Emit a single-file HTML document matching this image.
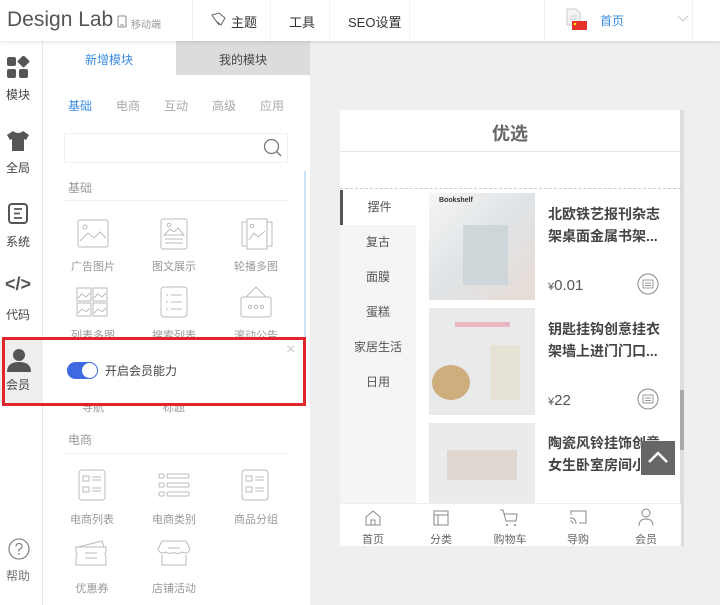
<!DOCTYPE html>
<html><head><meta charset="utf-8"><style>
*{margin:0;padding:0;box-sizing:border-box}
body{width:720px;height:605px;overflow:hidden;background:#efefef;font-family:"Liberation Sans","Noto Sans CJK SC",sans-serif;position:relative;color:#555}
.a{position:absolute}
.t{position:absolute;white-space:nowrap}
.hdr{left:0;top:0;width:720px;height:41px;background:#fff;box-shadow:0 1px 4px rgba(0,0,0,.12);z-index:5}
.sep{position:absolute;top:0;width:1px;height:41px;background:#f0f0f0}
.side{left:0;top:41px;width:43px;height:564px;background:#fff;border-right:1px solid #e8e8e8}
.sl{font-size:12px;color:#444;width:36px;text-align:center;left:0}
.panel{left:43px;top:41px;width:267px;height:564px;background:#fff}
.lbl{font-size:11px;color:#999;width:70px;text-align:center}
.cat{left:340px;width:76px;height:35px;font-size:12px;color:#555;text-align:center;line-height:35px}
.pt{font-size:14px;font-weight:bold;color:#444;line-height:22px;left:548px}
.pr{font-size:15px;color:#555;left:548px}
.tab{font-size:11px;color:#666;width:68px;text-align:center}
</style></head><body>
<div class="a hdr">
 <div class="t" style="left:7px;top:8px;font-size:21px;color:#555">Design Lab</div>
 <svg class="a" style="left:117px;top:15px" width="10" height="13"><rect x="1" y="1" width="8" height="11" rx="1" fill="none" stroke="#888"/><line x1="3" y1="10" x2="7" y2="10" stroke="#888"/></svg>
 <div class="t" style="left:131px;top:16px;font-size:10px;color:#999">移动端</div>
 <div class="sep" style="left:192px"></div>
 <svg class="a" style="left:210px;top:12px" width="17" height="15"><path d="M2 3 L9 1 L15 6 L11 13 L6 9 Z M6 9 L9 13" fill="none" stroke="#666"/></svg>
 <div class="t" style="left:231px;top:12px;font-size:13px;color:#333">主题</div>
 <div class="sep" style="left:270px"></div>
 <div class="t" style="left:289px;top:12px;font-size:13px;color:#333">工具</div>
 <div class="sep" style="left:329px"></div>
 <div class="t" style="left:348px;top:12px;font-size:13px;color:#333">SEO设置</div>
 <div class="sep" style="left:409px"></div>
 <div class="sep" style="left:544px"></div>
 <svg class="a" style="left:565px;top:8px" width="24" height="24"><path d="M2 1 H11 L15 5 V17 H2 Z" fill="#f4f4f4" stroke="#ccc"/><line x1="5" y1="8" x2="12" y2="8" stroke="#ccc"/><line x1="5" y1="11" x2="12" y2="11" stroke="#ccc"/><rect x="7" y="13" width="15" height="9" fill="#e5322b"/><circle cx="10" cy="16" r="1.3" fill="#ffde00"/></svg>
 <div class="t" style="left:600px;top:12px;font-size:12px;color:#3b8de0">首页</div>
 <svg class="a" style="left:677px;top:15px" width="12" height="8"><path d="M1 1 L6 6 L11 1" fill="none" stroke="#ccc"/></svg>
 <div class="sep" style="left:692px"></div>
</div>

<div class="a side">
 <svg class="a" style="left:6px;top:15px" width="24" height="24"><rect x="1" y="1" width="9" height="9" rx="2" fill="#555"/><rect x="13" y="1" width="9" height="9" rx="1" fill="#555" transform="rotate(45 17.5 5.5)"/><rect x="1" y="13" width="9" height="9" rx="2" fill="#555"/><rect x="13" y="13" width="9" height="9" rx="2" fill="#555"/></svg>
 <div class="t sl" style="top:45px">模块</div>
 <svg class="a" style="left:6px;top:89px" width="24" height="22"><path d="M7 1 L1 5 L4 10 L6 9 V21 H18 V9 L20 10 L23 5 L17 1 Q12 5 7 1Z" fill="#555"/></svg>
 <div class="t sl" style="top:118px">全局</div>
 <svg class="a" style="left:8px;top:162px" width="20" height="21"><rect x="1" y="1" width="18" height="19" rx="3" fill="none" stroke="#555" stroke-width="2"/><path d="M6 6H14M6 10.5H12M6 15H14" stroke="#555" stroke-width="1.8"/></svg>
 <div class="t sl" style="top:192px">系统</div>
 <div class="t" style="left:5px;top:233px;font-size:18px;font-weight:bold;color:#555">&lt;/&gt;</div>
 <div class="t sl" style="top:265px">代码</div>
 <svg class="a" style="left:8px;top:497px" width="22" height="22"><circle cx="11" cy="11" r="10" fill="none" stroke="#888" stroke-width="1.3"/><path d="M8 8.5 Q8 5.5 11 5.5 Q14 5.5 14 8.5 Q14 10.5 11 11.5 V13.5" fill="none" stroke="#888" stroke-width="1.3"/><circle cx="11" cy="16" r=".9" fill="#888"/></svg>
 <div class="t sl" style="top:526px;color:#777">帮助</div>
</div>

<div class="a panel">
 <div class="a" style="left:133px;top:0;width:134px;height:34px;background:#dcdcdc"></div>
 <div class="t" style="left:42px;top:10px;font-size:12px;color:#3b8de0">新增模块</div>
 <div class="t" style="left:176px;top:10px;font-size:12px;color:#444">我的模块</div>
 <div class="t" style="left:25px;top:56px;font-size:12px;color:#3b8de0">基础</div>
 <div class="t" style="left:73px;top:56px;font-size:12px;color:#aaa">电商</div>
 <div class="t" style="left:121px;top:56px;font-size:12px;color:#aaa">互动</div>
 <div class="t" style="left:169px;top:56px;font-size:12px;color:#aaa">高级</div>
 <div class="t" style="left:217px;top:56px;font-size:12px;color:#aaa">应用</div>
 <div class="a" style="left:21px;top:92px;width:224px;height:30px;border:1px solid #eee"></div>
 <svg class="a" style="left:220px;top:97px" width="20" height="20"><circle cx="8.5" cy="8.5" r="7" fill="none" stroke="#777" stroke-width="1.3"/><line x1="13.5" y1="13.5" x2="18" y2="18" stroke="#777" stroke-width="1.3"/></svg>
 <div class="a" style="left:261px;top:130px;width:2px;height:230px;background:#cfe3f7"></div>
 <div class="t" style="left:25px;top:138px;font-size:12px;color:#999">基础</div>
 <div class="a" style="left:21px;top:159px;width:224px;height:1px;background:#f0f0f0"></div>
 <svg class="a" style="left:34px;top:178px" width="32" height="30"><rect x="1" y="1" width="30" height="27" rx="2" fill="none" stroke="#bbb"/><circle cx="8" cy="8" r="2" fill="none" stroke="#bbb"/><path d="M3 22 L11 14 L17 19 L23 13 L29 19" fill="none" stroke="#bbb"/></svg>
 <div class="t lbl" style="left:15px;top:217px">广告图片</div>
 <svg class="a" style="left:117px;top:177px" width="28" height="32"><rect x="1" y="1" width="26" height="30" rx="2" fill="none" stroke="#bbb"/><circle cx="9" cy="7" r="1.8" fill="none" stroke="#bbb"/><path d="M4 17 L10 11 L14 14 L18 10 L24 17 Z M5 21H23M5 25H23" fill="none" stroke="#bbb"/></svg>
 <div class="t lbl" style="left:96px;top:217px">图文展示</div>
 <svg class="a" style="left:198px;top:177px" width="32" height="32"><rect x="1" y="4" width="6" height="24" fill="none" stroke="#bbb"/><rect x="25" y="4" width="6" height="24" fill="none" stroke="#bbb"/><rect x="6" y="1" width="20" height="30" fill="#fff" stroke="#bbb"/><circle cx="11" cy="8" r="1.8" fill="none" stroke="#bbb"/><path d="M8 22 L13 15 L17 19 L24 13" fill="none" stroke="#bbb"/></svg>
 <div class="t lbl" style="left:178px;top:217px">轮播多图</div>
 <svg class="a" style="left:33px;top:246px" width="32" height="30"><rect x="1" y="1" width="14" height="13" fill="none" stroke="#bbb"/><rect x="17" y="1" width="14" height="13" fill="none" stroke="#bbb"/><rect x="1" y="16" width="14" height="13" fill="none" stroke="#bbb"/><rect x="17" y="16" width="14" height="13" fill="none" stroke="#bbb"/><path d="M2 11 L6 7 L10 10 L14 6 M18 11 L22 7 L26 10 L30 6 M2 26 L6 22 L10 25 L14 21 M18 26 L22 22 L26 25 L30 21" fill="none" stroke="#bbb"/></svg>
 <svg class="a" style="left:117px;top:245px" width="28" height="32"><rect x="1" y="1" width="26" height="30" rx="3" fill="none" stroke="#bbb"/><path d="M6 9h2M11 9h11M6 16h2M11 16h11M6 23h2M11 23h11" stroke="#bbb"/></svg>
 <svg class="a" style="left:197px;top:244px" width="32" height="34"><path d="M6 12 L16 2 L26 12" fill="none" stroke="#bbb"/><rect x="1" y="12" width="30" height="20" rx="2" fill="none" stroke="#bbb"/><circle cx="10" cy="22" r="1.6" fill="none" stroke="#bbb"/><circle cx="16" cy="22" r="1.6" fill="none" stroke="#bbb"/><circle cx="22" cy="22" r="1.6" fill="none" stroke="#bbb"/></svg>
 <div class="t lbl" style="left:15px;top:286px">列表多图</div>
 <div class="t lbl" style="left:96px;top:286px">搜索列表</div>
 <div class="t lbl" style="left:178px;top:286px">滚动公告</div>
 <div class="t lbl" style="left:15px;top:358px">导航</div>
 <div class="t lbl" style="left:96px;top:358px">标题</div>
 <div class="t" style="left:25px;top:390px;font-size:12px;color:#999">电商</div>
 <div class="a" style="left:21px;top:412px;width:224px;height:1px;background:#f0f0f0"></div>
 <svg class="a" style="left:35px;top:428px" width="28" height="32"><rect x="1" y="1" width="26" height="30" rx="3" fill="none" stroke="#bbb"/><rect x="5" y="7" width="6" height="5" fill="none" stroke="#bbb"/><rect x="5" y="18" width="6" height="5" fill="none" stroke="#bbb"/><path d="M14 8h9M14 11h9M14 19h9M14 22h9" stroke="#bbb"/></svg>
 <div class="t lbl" style="left:14px;top:470px">电商列表</div>
 <svg class="a" style="left:115px;top:432px" width="32" height="24"><rect x="1" y="1" width="5" height="4" rx="1" fill="none" stroke="#bbb"/><rect x="9" y="1" width="22" height="4" rx="1" fill="none" stroke="#bbb"/><rect x="1" y="10" width="5" height="4" rx="1" fill="none" stroke="#bbb"/><rect x="9" y="10" width="22" height="4" rx="1" fill="none" stroke="#bbb"/><rect x="1" y="19" width="5" height="4" rx="1" fill="none" stroke="#bbb"/><rect x="9" y="19" width="22" height="4" rx="1" fill="none" stroke="#bbb"/></svg>
 <div class="t lbl" style="left:96px;top:470px">电商类别</div>
 <svg class="a" style="left:198px;top:428px" width="28" height="32"><rect x="1" y="1" width="26" height="30" rx="3" fill="none" stroke="#bbb"/><rect x="5" y="7" width="6" height="5" fill="none" stroke="#bbb"/><rect x="5" y="18" width="6" height="5" fill="none" stroke="#bbb"/><path d="M14 8h9M14 11h9M14 19h9M14 22h9" stroke="#bbb"/></svg>
 <div class="t lbl" style="left:178px;top:470px">商品分组</div>
 <svg class="a" style="left:31px;top:498px" width="36" height="28"><path d="M4 8 L28 2 L30 8" fill="none" stroke="#bbb"/><path d="M2 8 H32 V13 Q30 15 32 18 V26 H2 V18 Q4 15 2 13 Z" fill="none" stroke="#bbb"/><path d="M11 14h12M11 19h12" stroke="#bbb"/></svg>
 <div class="t lbl" style="left:14px;top:539px">优惠券</div>
 <svg class="a" style="left:113px;top:498px" width="36" height="28"><path d="M6 2 H30 L34 10 Q32 16 26 13 Q21 16 18 13 Q14 16 10 13 Q4 16 2 10 Z" fill="none" stroke="#bbb"/><path d="M6 16 V26 H30 V16" fill="none" stroke="#bbb"/><path d="M12 9h12" stroke="#bbb"/></svg>
 <div class="t lbl" style="left:96px;top:539px">店铺活动</div>
</div>

<div class="a" style="left:2px;top:337px;width:304px;height:69px;border:3px solid #e0252c;z-index:6"></div>
<div class="a" style="left:43px;top:340px;width:260px;height:63px;background:#fff;z-index:5"></div>
<div class="a" style="left:0;top:340px;width:43px;height:63px;background:#eee;z-index:5"></div>
<svg class="a" style="left:6px;top:348px;z-index:6" width="26" height="24"><circle cx="13" cy="7" r="6" fill="#555"/><path d="M1 24 Q1 14 13 14 Q25 14 25 24Z" fill="#555"/></svg>
<div class="t" style="left:6px;top:376px;font-size:12px;color:#444;z-index:6">会员</div>
<div class="a" style="left:67px;top:362px;width:31px;height:17px;border-radius:9px;background:#3e6ae1;z-index:6"></div>
<div class="a" style="left:82px;top:363px;width:15px;height:15px;border-radius:50%;background:#fff;z-index:6"></div>
<div class="t" style="left:105px;top:362px;font-size:12px;color:#444;z-index:6">开启会员能力</div>
<div class="t" style="left:286px;top:341px;font-size:16px;color:#ccc;z-index:6">×</div>

<div class="a" style="left:340px;top:110px;width:342px;height:436px;background:#fff"></div>
<div class="a" style="left:680px;top:110px;width:4px;height:436px;background:#ddd"></div>
<div class="a" style="left:680px;top:390px;width:4px;height:60px;background:#aaa"></div>
<div class="t" style="left:492px;top:120px;font-size:18px;font-weight:bold;color:#666">优选</div>
<div class="a" style="left:340px;top:151px;width:341px;height:1px;background:#e5e5e5"></div>
<div class="a" style="left:340px;top:188px;width:341px;border-top:1px dashed #ccc"></div>
<div class="a" style="left:340px;top:190px;width:76px;height:313px;background:#f5f5f5"></div>
<div class="a cat" style="top:190px;background:#fff;border-left:3px solid #555">摆件</div>
<div class="a cat" style="top:225px">复古</div>
<div class="a cat" style="top:260px">面膜</div>
<div class="a cat" style="top:295px">蛋糕</div>
<div class="a cat" style="top:330px">家居生活</div>
<div class="a cat" style="top:365px">日用</div>
<div class="a" style="left:429px;top:193px;width:106px;height:107px;background:linear-gradient(135deg,#f5f5f5,#dfe3e6 50%,#e8dcd4)"></div>
<div class="t" style="left:439px;top:197px;font-size:7px;font-weight:bold;color:#333">Bookshelf</div>
<div class="a" style="left:463px;top:225px;width:45px;height:60px;background:#cfd6d9"></div>
<div class="a" style="left:429px;top:308px;width:106px;height:107px;background:#e8eaec"></div>
<div class="a" style="left:455px;top:322px;width:55px;height:5px;background:#eab6c2"></div>
<div class="a" style="left:432px;top:365px;width:38px;height:35px;border-radius:50%;background:#cfae7e"></div>
<div class="a" style="left:490px;top:345px;width:30px;height:55px;background:#e6e2d6"></div>
<div class="a" style="left:429px;top:423px;width:106px;height:80px;background:#e9ebed"></div>
<div class="a" style="left:447px;top:450px;width:70px;height:30px;background:#ddd2c8;opacity:.8"></div>
<div class="t pt" style="top:203px">北欧铁艺报刊杂志<br>架桌面金属书架...</div>
<div class="t pr" style="top:277px"><span style="font-size:11px">¥</span>0.01</div>
<div class="t pt" style="top:318px">钥匙挂钩创意挂衣<br>架墙上进门门口...</div>
<div class="t pr" style="top:392px"><span style="font-size:11px">¥</span>22</div>
<div class="t pt" style="top:432px">陶瓷风铃挂饰创意<br>女生卧室房间小...</div>
<svg class="a" style="left:637px;top:273px" width="22" height="22"><circle cx="11" cy="11" r="10" fill="none" stroke="#999" stroke-width="1.2"/><rect x="6" y="7" width="10" height="8" rx="1" fill="none" stroke="#999"/><path d="M8 10h6M8 12.5h6" stroke="#999"/></svg>
<svg class="a" style="left:637px;top:388px" width="22" height="22"><circle cx="11" cy="11" r="10" fill="none" stroke="#999" stroke-width="1.2"/><rect x="6" y="7" width="10" height="8" rx="1" fill="none" stroke="#999"/><path d="M8 10h6M8 12.5h6" stroke="#999"/></svg>
<div class="a" style="left:641px;top:441px;width:34px;height:34px;background:#666"></div>
<svg class="a" style="left:647px;top:449px" width="22" height="16"><path d="M2 13 L11 4 L20 13" fill="none" stroke="#fff" stroke-width="2.5"/></svg>
<div class="a" style="left:340px;top:503px;width:341px;height:42px;background:#fff;border-top:1px solid #eee"></div>
<svg class="a" style="left:364px;top:509px" width="18" height="18"><path d="M2 8 L9 2 L16 8 V16 H2 Z M7 16 V11 H11 V16" fill="none" stroke="#888"/></svg>
<div class="t tab" style="left:339px;top:531px">首页</div>
<svg class="a" style="left:432px;top:509px" width="18" height="18"><rect x="2" y="2" width="14" height="14" fill="none" stroke="#888"/><path d="M2 6H16M6 6V16" stroke="#888"/></svg>
<div class="t tab" style="left:407px;top:531px">分类</div>
<svg class="a" style="left:499px;top:508px" width="20" height="20"><path d="M1 2 H4 L7 13 H17 L18 6 H5" fill="none" stroke="#888"/><circle cx="8" cy="17" r="1" fill="#888"/><circle cx="16" cy="17" r="1" fill="#888"/></svg>
<div class="t tab" style="left:476px;top:531px">购物车</div>
<svg class="a" style="left:568px;top:509px" width="20" height="18"><path d="M3 6 V2 H18 V14 H11" fill="none" stroke="#888"/><path d="M2 9 Q8 9 8 15 M2 12 Q5 12 5 15" fill="none" stroke="#888"/></svg>
<div class="t tab" style="left:544px;top:531px">导购</div>
<svg class="a" style="left:637px;top:508px" width="18" height="20"><circle cx="9" cy="5" r="4" fill="none" stroke="#888"/><path d="M2 18 Q2 11 9 11 Q16 11 16 18" fill="none" stroke="#888"/></svg>
<div class="t tab" style="left:612px;top:531px">会员</div>
</body></html>
